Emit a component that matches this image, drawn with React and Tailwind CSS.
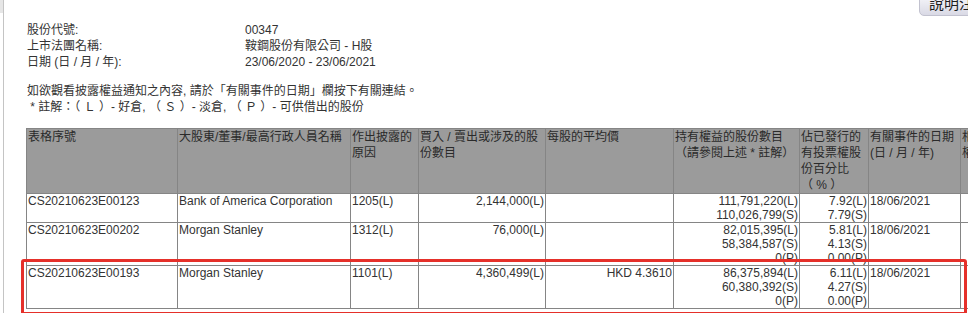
import React from "react";

const FONT = { fontFamily: '"Liberation Sans", Arial, "Noto Sans CJK TC", sans-serif' };

const rows = [
  {
    id: "CS20210623E00123",
    name: "Bank of America Corporation",
    reason: "1205(L)",
    qty: "2,144,000(L)",
    price: "",
    held: ["111,791,220(L)", "110,026,799(S)"],
    pct: ["7.92(L)", "7.79(S)"],
    date: "18/06/2021",
  },
  {
    id: "CS20210623E00202",
    name: "Morgan Stanley",
    reason: "1312(L)",
    qty: "76,000(L)",
    price: "",
    held: ["82,015,395(L)", "58,384,587(S)", "0(P)"],
    pct: ["5.81(L)", "4.13(S)", "0.00(P)"],
    date: "18/06/2021",
  },
  {
    id: "CS20210623E00193",
    name: "Morgan Stanley",
    reason: "1101(L)",
    qty: "4,360,499(L)",
    price: "HKD 4.3610",
    held: ["86,375,894(L)", "60,380,392(S)", "0(P)"],
    pct: ["6.11(L)", "4.27(S)", "0.00(P)"],
    date: "18/06/2021",
  },
];

const th = "border border-[#858585] align-top text-left font-normal px-[1px] leading-[16px] whitespace-nowrap overflow-hidden";
const td = "border border-[#858585] align-top px-[1px] leading-[14px] whitespace-nowrap overflow-hidden";

export default function App() {
  return (
    <div className="relative w-[968px] h-[313px] overflow-hidden bg-white text-[12px] text-[#333]" style={FONT}>
      <div className="absolute left-0 top-0 w-[3px] h-[13px] bg-[#e6e6e6]" />
      <div className="ml-[3px] border-l border-[#c4c4c4] pl-[22px] min-h-[313px]">
        <div className="pt-[22px] pl-px grid grid-cols-[218px_1fr] leading-[16px]">
          <div>股份代號:</div>
          <div>00347</div>
          <div>上市法團名稱:</div>
          <div>鞍鋼股份有限公司 - H股</div>
          <div>日期 (日 / 月 / 年):</div>
          <div>23/06/2020 - 23/06/2021</div>
        </div>
        <div className="mt-[13px] pl-px leading-[16px]">
          <div>如欲觀看披露權益通知之內容, 請於「有關事件的日期」欄按下有關連結。</div>
          <div className="whitespace-pre"> * 註解：（ Ｌ ）- 好倉, （ Ｓ ）- 淡倉, （ Ｐ ）- 可供借出的股份</div>
        </div>
        <table className="mt-[13px] border-collapse table-fixed w-[1034px]">
          <colgroup>
            <col className="w-[151px]" />
            <col className="w-[173px]" />
            <col className="w-[68px]" />
            <col className="w-[127px]" />
            <col className="w-[128px]" />
            <col className="w-[126px]" />
            <col className="w-[69px]" />
            <col className="w-[92px]" />
            <col className="w-[100px]" />
          </colgroup>
          <thead>
            <tr className="bg-[#9b9b9b] text-[#2a2a2a] h-[65px]">
              <th className={th}>表格序號</th>
              <th className={th}>大股東/董事/最高行政人員名稱</th>
              <th className={th}>作出披露的<br />原因</th>
              <th className={th}>買入 / 賣出或涉及的股<br />份數目</th>
              <th className={th}>每股的平均價</th>
              <th className={th}>持有權益的股份數目<br />（請參閱上述 * 註解）</th>
              <th className={th}>佔已發行的<br />有投票權股<br />份百分比<br />（ % ）</th>
              <th className={th}>有關事件的日期<br />(日 / 月 / 年)</th>
              <th className={th}>相關法團股份<br />權益</th>
            </tr>
          </thead>
          <tbody>
            {rows.map((r) => (
              <tr key={r.id}>
                <td className={td}>{r.id}</td>
                <td className={td}>{r.name}</td>
                <td className={td}>{r.reason}</td>
                <td className={td + " text-right"}>{r.qty}</td>
                <td className={td + " text-right"}>{r.price}</td>
                <td className={td + " text-right"}>
                  {r.held.map((h) => (
                    <div key={h}>{h}</div>
                  ))}
                </td>
                <td className={td + " text-right"}>
                  {r.pct.map((p) => (
                    <div key={p}>{p}</div>
                  ))}
                </td>
                <td className={td}>{r.date}</td>
                <td className={td}></td>
              </tr>
            ))}
          </tbody>
        </table>
      </div>

      <div className="absolute left-[919px] top-[-8px] h-[24px] pl-[9px] pr-[12px] rounded-bl-[5px] border border-[#c2c2cf] bg-gradient-to-b from-[#fbfbfd] to-[#d9d9e5] text-[15px] leading-[22px] text-[#1e1e1e] whitespace-nowrap">
        說明注釋
      </div>

      <div className="absolute left-[21px] top-[259px] w-[946px] h-[56px] border-[3px] border-[#e5302a] rounded-[3px] pointer-events-none" />
    </div>
  );
}
